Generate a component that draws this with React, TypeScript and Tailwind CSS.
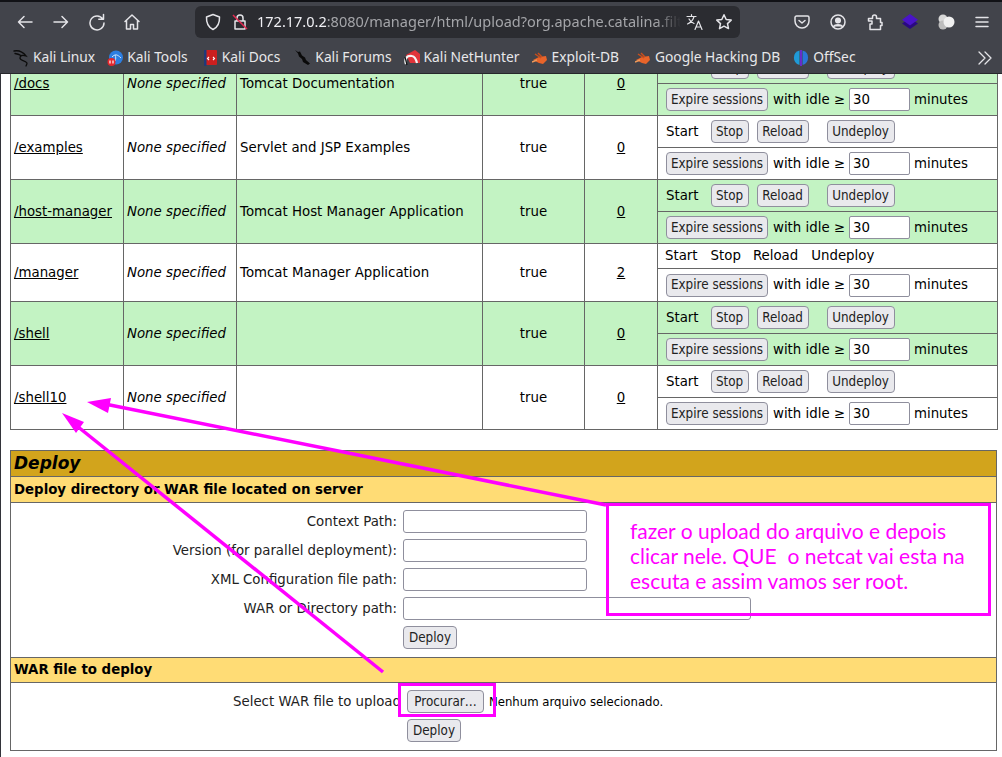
import React from "react";

const ic = { fill: "none", stroke: "#e4e4e8", strokeWidth: 1.5, strokeLinecap: "round" as const, strokeLinejoin: "round" as const };

function Btn({ children, className = "" }: { children: React.ReactNode; className?: string }) {
  return (
    <span className={`inline-flex h-[23px] shrink-0 items-center justify-center whitespace-nowrap rounded-[4px] border border-[#8f8f9d] bg-[#e9e9ed] font-['DejaVu_Sans_Condensed','DejaVu_Sans',sans-serif] text-[13.33px] text-[#222] ${className}`}>
      {children}
    </span>
  );
}

function Field({ className = "" }: { className?: string }) {
  return <span className={`block h-[23px] rounded-[3px] border border-[#8f8f9d] bg-white ${className}`} />;
}

function Commands({ stopped }: { stopped?: boolean }) {
  if (stopped) {
    return (
      <div className="flex items-center pl-[7px]">
        <span>Start</span>
        <span className="ml-[13px]">Stop</span>
        <span className="ml-[12px]">Reload</span>
        <span className="ml-[13px]">Undeploy</span>
      </div>
    );
  }
  return (
    <div className="flex items-center pl-[8px]">
      <span>Start</span>
      <Btn className="ml-[12px] w-[38px]">Stop</Btn>
      <Btn className="ml-[8px] w-[52px]">Reload</Btn>
      <Btn className="ml-[18px] w-[68px]">Undeploy</Btn>
    </div>
  );
}

function Expire() {
  return (
    <div className="flex items-center pl-[8px]">
      <Btn className="w-[102px]">Expire sessions</Btn>
      <span className="ml-[5px]">with idle ≥</span>
      <span className="ml-[4px] flex h-[23px] w-[61px] items-center rounded-[2px] border border-[#8f8f9d] bg-white pl-[3px]">30</span>
      <span className="ml-[4px]">minutes</span>
    </div>
  );
}

const rows = [
  { path: "/docs", name: "Tomcat Documentation", count: "0", top: 32, bottom: 32, green: true },
  { path: "/examples", name: "Servlet and JSP Examples", count: "0", top: 32, bottom: 32 },
  { path: "/host-manager", name: "Tomcat Host Manager Application", count: "0", top: 32, bottom: 32, green: true },
  { path: "/manager", name: "Tomcat Manager Application", count: "2", top: 25, bottom: 33, stopped: true },
  { path: "/shell", name: "", count: "0", top: 32, bottom: 32, green: true },
  { path: "/shell10", name: "", count: "0", top: 32, bottom: 32 },
];

function AppTable() {
  const cell = "border border-[#666] p-0 align-middle";
  return (
    <table className="ml-[9px] mt-[-23px] w-[987px] table-fixed border-collapse text-[13.33px] text-black">
      <colgroup>
        <col className="w-[113px]" />
        <col className="w-[113px]" />
        <col className="w-[246px]" />
        <col className="w-[102px]" />
        <col className="w-[73px]" />
        <col className="w-[340px]" />
      </colgroup>
      <tbody>
        {rows.map((r) => {
          const bg = r.green ? "bg-[#c3f3c3]" : "bg-white";
          return (
            <React.Fragment key={r.path}>
              <tr className={bg} style={{ height: r.top }}>
                <td rowSpan={2} className={`${cell} pl-[3px] underline`}>{r.path}</td>
                <td rowSpan={2} className={`${cell} pl-[3px] italic`}>None specified</td>
                <td rowSpan={2} className={`${cell} pl-[3px]`}>{r.name}</td>
                <td rowSpan={2} className={`${cell} text-center`}>true</td>
                <td rowSpan={2} className={`${cell} text-center underline`}>{r.count}</td>
                <td className={cell}><Commands stopped={r.stopped} /></td>
              </tr>
              <tr className={bg} style={{ height: r.bottom }}>
                <td className={cell}><Expire /></td>
              </tr>
            </React.Fragment>
          );
        })}
      </tbody>
    </table>
  );
}

function DeployBox() {
  const labels = ["Context Path:", "Version (for parallel deployment):", "XML Configuration file path:", "WAR or Directory path:"];
  return (
    <section className="ml-[9px] mt-[20px] w-[987px] border border-[#666] text-[13.33px] text-black">
      <h2 className="flex h-[26px] items-center border-b border-[#666] bg-[#d2a41c] pl-[3px] pt-[1px] text-[17px] font-bold italic">Deploy</h2>
      <h3 className="flex h-[26px] items-center border-b border-[#666] bg-[#ffdc75] pl-[3px] font-bold">Deploy directory or WAR file located on server</h3>
      <div className="grid grid-cols-[392px_1fr] items-center gap-y-[6px] bg-white pb-[8px] pt-[7px]">
        {labels.map((l, i) => (
          <React.Fragment key={l}>
            <span className="pr-[6px] text-right text-[#222]">{l}</span>
            <Field className={i === 3 ? "w-[348px]" : "w-[184px]"} />
          </React.Fragment>
        ))}
        <span />
        <Btn className="w-[54px]">Deploy</Btn>
      </div>
      <h3 className="flex h-[26px] items-center border-y border-[#666] bg-[#ffdc75] pl-[3px] font-bold">WAR file to deploy</h3>
      <div className="grid grid-cols-[396px_1fr] items-center gap-y-[6px] bg-white pb-[8px] pt-[7px]">
        <span className="pr-[6px] text-right text-[#222]">Select WAR file to upload</span>
        <div className="flex items-center">
          <Btn className="w-[77px]">Procurar…</Btn>
          <span className="ml-[5px] font-['DejaVu_Sans_Condensed','DejaVu_Sans',sans-serif] text-[13px]">Nenhum arquivo selecionado.</span>
        </div>
        <span />
        <Btn className="w-[54px]">Deploy</Btn>
      </div>
    </section>
  );
}

function Annotations() {
  return (
    <>
      <svg className="pointer-events-none absolute left-0 top-0" width="1002" height="757">
        <line x1="606" y1="505" x2="100" y2="403" stroke="#ff00ff" strokeWidth="3.5" />
        <polygon points="87,402 111,398 108,413" fill="#ff00ff" />
        <line x1="383" y1="672" x2="72" y2="422" stroke="#ff00ff" strokeWidth="3.5" />
        <polygon points="62,413 84,422 76,433" fill="#ff00ff" />
      </svg>
      <div className="absolute left-[606px] top-[503px] h-[113px] w-[385px] border-[3px] border-[#ff00ff] pl-[21px] pt-[12px] font-['Lato',sans-serif] text-[21px] leading-[25px] text-[#ff00ff]">
        fazer o upload do arquivo e depois<br />
        clicar nele. QUE&nbsp; o netcat vai esta na<br />
        escuta e assim vamos ser root.
      </div>
      <div className="absolute left-[398px] top-[683px] h-[34px] w-[98px] border-[3px] border-[#ff00ff]" />
    </>
  );
}

function ToolIcon({ children, x = 18 }: { children: React.ReactNode; x?: number }) {
  return (
    <svg width={x} height={18} viewBox={`0 0 ${x} 18`} className="shrink-0" {...ic}>
      {children}
    </svg>
  );
}

function Toolbar() {
  return (
    <div className="flex h-[38px] items-center bg-[#42444b] pl-[16px] pt-[2px]">
      <ToolIcon><path d="M16 9H2.5M8 3.5 2.5 9 8 14.5" /></ToolIcon>
      <span className="ml-[18px]"><ToolIcon><path d="M2 9h13.5M10 3.5 15.5 9 10 14.5" /></ToolIcon></span>
      <span className="ml-[18px]"><ToolIcon><path d="M14.8 6A7 7 0 1 0 16 10M15.5 1.5V6.2H10.8" /></ToolIcon></span>
      <span className="ml-[17px]"><ToolIcon><path d="M2 8.5 9 2l7 6.5M3.5 7.5V16h4v-4.5h3V16h4V7.5" /></ToolIcon></span>
      <div className="ml-[54px] flex h-[32px] w-[545px] items-center overflow-hidden rounded-[6px] bg-[#2b2c31] pl-[9px]">
        <ToolIcon><path d="M9 1.5 15.5 4c.3 6.5-1.8 10.3-6.500 12.500C4.300 14.300 2.200 10.500 2.500 4Z" /></ToolIcon>
        <svg width="16" height="18" viewBox="0 0 16 18" className="ml-[10px] shrink-0">
          <path d="M3 8h10v8H3zM5 8V5a3 3 0 0 1 6 0v3" {...ic} />
          <path d="M1 2l14 14" stroke="#e22850" strokeWidth="1.500" />
        </svg>
        <div className="ml-[9px] w-[424px] shrink-0 overflow-hidden whitespace-nowrap font-['Noto_Sans',sans-serif] text-[14.5px] text-[#a4a5a9] [mask-image:linear-gradient(to_right,black_94%,transparent)]">
          <span className="text-[#f0f0f4]">172.17.0.2</span>:8080/manager/html/upload?org.apache.catalina.filter.CSRF_NONCE
        </div>
        <svg width="18" height="18" viewBox="0 0 18 18" className="ml-[5px] shrink-0" {...ic} strokeWidth={1.2}>
          <path d="M1 3.500h9M5.500 1.500v2M8 3.500c-.8 3.500-3 6-6.500 7.500M3 6c1 2 2.500 3.500 5 4.500M9 16.500l3.500-8.500 3.500 8.500M10.200 14h4.600" />
        </svg>
        <svg width="18" height="18" viewBox="0 0 18 18" className="ml-[11px] shrink-0" {...ic}>
          <path d="M9 1.800l2.200 4.700 5 .6-3.700 3.500 1 5L9 13.200l-4.500 2.400 1-5L1.800 7.100l5-.6Z" />
        </svg>
      </div>
      <div className="ml-[54px] flex items-center">
        <svg width="16" height="18" viewBox="0 0 16 18" {...ic}>
          <path d="M2.500 3h11A1.500 1.500 0 0 1 15 4.500V8a7 7 0 0 1-14 0V4.500A1.500 1.500 0 0 1 2.500 3ZM5 7.500 8 10l3-2.500" />
        </svg>
        <svg width="16" height="18" viewBox="0 0 16 18" className="ml-[20px]" {...ic}>
          <circle cx="8" cy="9" r="7" />
          <circle cx="8" cy="7.500" r="2.300" fill="#e4e4e8" />
          <path d="M3.500 13.500C5 11 11 11 12.500 13.500" fill="#e4e4e8" />
        </svg>
        <svg width="16" height="18" viewBox="0 0 16 18" className="ml-[21px]" {...ic}>
          <path d="M1.500 5.500h4V4a2 2 0 0 1 4 0v1.500h4v4H15v3h-1.500v4H3V11h2V8H1.500Z" />
        </svg>
        <svg width="18" height="18" viewBox="0 0 18 18" className="ml-[18px]">
          <path d="M9 5 17 10.500 9 16 1 10.500Z" fill="#2a0a80" />
          <path d="M9 1 17 6.800 9 12.500 1 6.800Z" fill="#4a14c8" />
        </svg>
        <svg width="18" height="18" viewBox="0 0 18 18" className="ml-[18px]">
          <circle cx="6" cy="6" r="4.500" fill="#d8d8d8" />
          <circle cx="6" cy="12" r="4.500" fill="#bdbdbd" />
          <circle cx="12" cy="9" r="5.500" fill="#f0f0f0" />
        </svg>
        <svg width="14" height="18" viewBox="0 0 14 18" className="ml-[20px]" stroke="#e4e4e8" strokeWidth="1.500" strokeLinecap="round">
          <path d="M1 4.500h12M1 9h12M1 13.500h12" />
        </svg>
      </div>
    </div>
  );
}

const bug = (
  <svg width="16" height="16" viewBox="0 0 16 16" className="shrink-0">
    <path d="M1 10 7 7l7-1 1 4-4 4-4-1Z" fill="#e8642a" />
    <path d="M3 4l6 4M6 3l4 4" stroke="#c94e1c" strokeWidth="1.500" />
    <path d="M0 12l5-2" stroke="#f09a5a" strokeWidth="1.500" />
  </svg>
);

const marks: { label: string; ml: number; icon: React.ReactNode }[] = [
  {
    label: "Kali Linux", ml: 0,
    icon: (
      <svg width="16" height="18" viewBox="0 0 16 18" className="shrink-0" fill="none" stroke="#0c0c0c" strokeWidth="1.300" strokeLinecap="round">
        <path d="M1 2c5-1 9 1 12 5-3-1-6-1-6 2s5 2 7 5c0 1-.5 2-1 3M2 4.500c2 .2 4 .7 6 2" />
      </svg>
    ),
  },
  {
    label: "Kali Tools", ml: 12,
    icon: (
      <svg width="16" height="18" viewBox="0 0 16 18" className="shrink-0">
        <circle cx="9" cy="8.500" r="7" fill="#2d7ee0" />
        <path d="M5 8c3-3 5-3 9 1M8 6c1 2 1 4 0 6" stroke="#cfe4fa" strokeWidth="1" fill="none" />
        <circle cx="4.500" cy="13" r="4" fill="#e5262c" />
        <path d="M3 11.500v3M6 11.500v3" stroke="#fff" strokeWidth="1.200" />
      </svg>
    ),
  },
  {
    label: "Kali Docs", ml: 16,
    icon: (
      <svg width="14" height="18" viewBox="0 0 14 18" className="shrink-0">
        <rect x="0" y="1" width="13" height="15" rx="1" fill="#cc1f1f" />
        <rect x="0" y="1" width="2.500" height="16" fill="#1f3a7a" />
        <path d="M5 8l-1.500 1.500L5 11M9 8l1.500 1.500L9 11" stroke="#fff" strokeWidth="1.100" fill="none" />
      </svg>
    ),
  },
  {
    label: "Kali Forums", ml: 15,
    icon: (
      <svg width="16" height="18" viewBox="0 0 16 18" className="shrink-0">
        <path d="M0 1 3 3l2-.5 2 4 3 2 1 2.500 4 3.500-2 1.500-5-3-1-3-3-2.500-1-3Z" fill="#0a0a0a" />
      </svg>
    ),
  },
  {
    label: "Kali NetHunter", ml: 12,
    icon: (
      <svg width="16" height="18" viewBox="0 0 16 18" className="shrink-0">
        <path d="M2 6 11 1l5 4v9H6Z" fill="#e0343a" />
        <path d="M2 15c-2-5 1-9 6-8 3 .5 4 3 5 7" stroke="#f4f4f4" strokeWidth="2.200" fill="none" />
        <path d="M1 8l2 8" stroke="#111" strokeWidth="1.200" />
      </svg>
    ),
  },
  { label: "Exploit-DB", ml: 12, icon: bug },
  { label: "Google Hacking DB", ml: 16, icon: bug },
  {
    label: "OffSec", ml: 13,
    icon: (
      <svg width="16" height="18" viewBox="0 0 16 18" className="shrink-0">
        <path d="M6.500 1.500A7.500 7.500 0 0 0 6.500 16Z" fill="#1f9bd8" />
        <path d="M9.500 1.500a7.500 7.500 0 0 1 0 14.500Z" fill="#2b76d8" />
        <path d="M8 1v16" stroke="#6a2bc8" strokeWidth="2" />
      </svg>
    ),
  },
];

function Bookmarks() {
  return (
    <div className="flex h-[34px] items-center border-b border-[#26272b] bg-[#42444b] pl-[13px] pt-[2px] font-['Noto_Sans',sans-serif] text-[13.8px] text-[#e8e8ea]">
      {marks.map((m) => (
        <div key={m.label} className="flex items-center gap-[4px]" style={{ marginLeft: m.ml }}>
          {m.icon}
          <span className="whitespace-nowrap">{m.label}</span>
        </div>
      ))}
      <svg width="14" height="14" viewBox="0 0 14 14" className="ml-auto mr-[10px]" fill="none" stroke="#e4e4e8" strokeWidth="1.300" strokeLinecap="round" strokeLinejoin="round">
        <path d="M1 1l6 6-6 6M7 1l6 6-6 6" />
      </svg>
    </div>
  );
}

export default function App() {
  return (
    <div className="relative h-[757px] w-[1002px] overflow-hidden bg-white font-['DejaVu_Sans',sans-serif]">
      <div className="h-[2px] bg-[#111216]" />
      <Toolbar />
      <Bookmarks />
      <main className="h-[683px] overflow-hidden border-l border-[#33343a]">
        <AppTable />
        <DeployBox />
      </main>
      <Annotations />
    </div>
  );
}
